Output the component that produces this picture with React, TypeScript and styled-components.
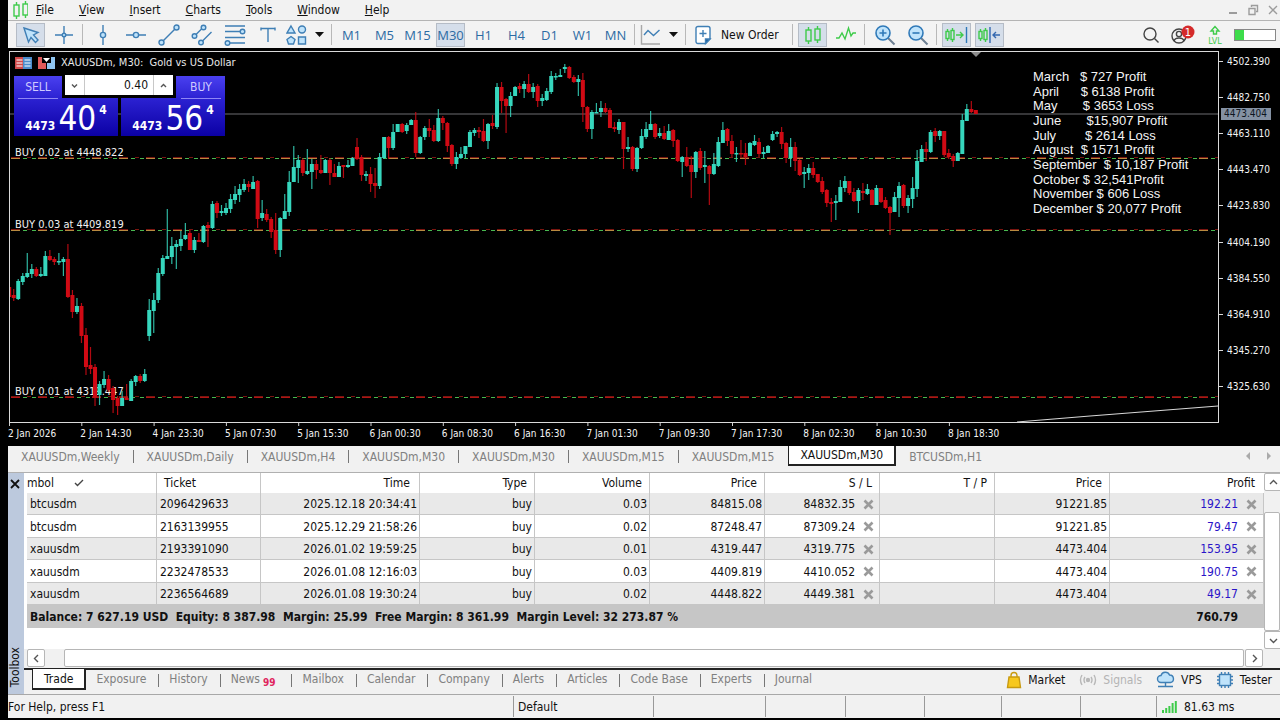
import React from "react";
import styled, { createGlobalStyle } from "styled-components";

const ui = `"DejaVu Sans Condensed", "DejaVu Sans", Verdana, sans-serif`;

const Global = createGlobalStyle`
  *, *::before, *::after { box-sizing: border-box; }
  body { margin: 0; background: #000; }
  body, button, input, table { font-family: ${ui}; font-stretch: condensed; font-size: 12px; color: #111; }
  button, input { margin: 0; padding: 0; border: 0; background: none; }
  svg { display: block; flex: none; }
`;

const Shell = styled.div`
  min-height: 100vh;
  padding-left: 8px;
  display: flex;
  flex-direction: column;
  background: #000;
  overflow: hidden;
`;

/* ---------- menu and toolbar ---------- */

const MenuBar = styled.nav`
  display: flex;
  align-items: center;
  height: 21px;
  padding-left: 5px;
  background: #f2f2f2;
  border-bottom: 1px solid #b4b4b4;
`;

const MenuItem = styled.button`
  padding: 0 17px 0 8px;
  line-height: 20px;
  &::first-letter { text-decoration: underline; }
`;

const WindowControls = styled.div`
  display: flex;
  gap: 8px;
  margin-left: auto;
  padding-right: 1px;
`;

const Toolbar = styled.div`
  display: flex;
  align-items: center;
  height: 27px;
  padding: 0 4px 0 6px;
  background: #f3f3f3;
`;

const Cell = styled.span<{ $w?: number }>`
  width: ${(p) => p.$w ?? 33}px;
  display: flex;
  justify-content: center;
`;

const Tool = styled.button<{ $on?: boolean }>`
  width: 29px;
  max-width: 100%;
  height: 24px;
  display: flex;
  align-items: center;
  justify-content: center;
  border: 1px solid ${(p) => (p.$on ? "#b5bcc6" : "transparent")};
  background: ${(p) => (p.$on ? "#d5deea" : "transparent")};
`;

const Period = styled(Tool)`
  font-family: "Open Sans", "Noto Sans", sans-serif;
  font-stretch: normal;
  font-size: 13px;
  color: #2c6ba3;
`;

const Divider = styled.span`
  width: 6px;
  height: 21px;
  background: linear-gradient(#b8b8b8, #b8b8b8) 2px 0 / 1px 100% no-repeat;
`;

const NewOrder = styled.button`
  width: 101px;
  display: flex;
  align-items: center;
  justify-content: flex-start;
  gap: 8px;
  padding-left: 6px;
`;

const Status = styled.div`
  display: flex;
  align-items: center;
  gap: 10px;
  margin-left: auto;
`;

const Battery = styled.span`
  width: 42px;
  height: 12px;
  border: 1px solid #888;
  background: linear-gradient(90deg, #3ddc4a 9px, #fff 9px);
`;

/* ---------- chart ---------- */

const ChartPane = styled.section`
  display: flex;
  height: 398px;
  padding: 3px 0 0 1px;
  color: #e8e8e8;
`;

const PlotColumn = styled.div`
  flex: 1;
  min-width: 0;
  display: flex;
  flex-direction: column;
`;

const Plot = styled.div`
  position: relative;
  height: 372px;
  border: 1px solid #dadada;
  overflow: hidden;
`;

const AxisSvg = styled.svg`
  overflow: visible;
  text { font: 10px ${ui}; font-stretch: condensed; fill: #f4f4f4; }
`;

const ChartSvg = styled.svg`
  text { font: 11px ${ui}; font-stretch: condensed; fill: #f2f2f2; }
`;

const PriceAxis = styled.ul`
  position: relative;
  width: 61px;
  height: 342px;
  margin: 0;
  padding: 4px 0 0;
  list-style: none;
  display: flex;
  flex-direction: column;
  justify-content: space-between;
`;

const PriceTick = styled.li`
  display: flex;
  align-items: center;
  gap: 4px;
  height: 12px;
  font-size: 10px;
  color: #f4f4f4;
  &::before { content: ""; width: 4px; height: 1px; background: #d8d8d8; }
`;

const CurrentPrice = styled.li`
  position: absolute;
  top: 57px;
  left: 2px;
  width: 50px;
  padding-left: 3px;
  font-size: 10px;
  line-height: 12px;
  background: #8491a3;
  color: #0c1420;
`;

const ChartTitle = styled.div`
  position: absolute;
  top: 4px;
  left: 5px;
  display: flex;
  align-items: center;
  font-size: 11px;
  line-height: 14px;
  white-space: pre;
  svg + svg { margin: 0 6px 0 6px; }
`;

const TradePanel = styled.div`
  position: absolute;
  top: 24px;
  left: 4px;
  display: flex;
  gap: 3px;
`;

const Quote = styled.button<{ $side: "left" | "right" }>`
  width: 104px;
  height: 60px;
  display: flex;
  flex-direction: column;
  justify-content: space-between;
  align-items: ${(p) => (p.$side === "left" ? "flex-start" : "flex-end")};
  background: linear-gradient(#4a40f0, #2a20d0 40%, #0b00a4);
  color: #fff;
`;

const QuoteSide = styled.span`
  width: 40px;
  margin: 0 4px;
  line-height: 22px;
  text-align: center;
  color: #cfcaff;
  border-bottom: 1px solid #8f86f5;
`;

const QuotePrice = styled.span`
  display: flex;
  align-items: flex-end;
  align-self: center;
  gap: 3px;
  height: 35px;
  font-weight: bold;
  line-height: 20px;
`;

const Pips = styled.span`
  font-size: 33px;
  font-weight: normal;
  line-height: 35px;
`;

const Point = styled.span`
  align-self: flex-start;
  line-height: 18px;
`;

const Lots = styled.div`
  position: absolute;
  top: -1px;
  left: 48px;
  width: 114px;
  display: flex;
  padding: 0 3px 3px;
  background: #000;
`;

const LotInput = styled.input`
  flex: 1;
  min-width: 0;
  height: 20px;
  padding-right: 5px;
  text-align: right;
  background: #fff;
  border: solid #c8c8c8;
  border-width: 0 1px;
`;

const Spin = styled.button`
  width: 19px;
  display: grid;
  place-items: center;
  background: #fff;
`;

const Notes = styled.ul`
  position: absolute;
  top: 18px;
  left: 1023px;
  height: 146px;
  margin: 0;
  padding: 0;
  list-style: none;
  display: flex;
  flex-direction: column;
  justify-content: space-between;
  font-family: "Liberation Sans", Arial, sans-serif;
  font-stretch: normal;
  font-size: 13px;
  line-height: 14px;
  white-space: pre;
  color: #f4f4f4;
`;

/* ---------- tabs ---------- */

const ChartTabs = styled.div`
  display: flex;
  align-items: flex-start;
  height: 27px;
  background: #f1f1f1;
  border-bottom: 1px solid #b0b0b0;
`;

const Tab = styled.button<{ $on?: boolean; $plain?: boolean }>`
  position: relative;
  padding: ${(p) => (p.$on ? "1px 11px 0" : "2px 14px 0 13px")};
  line-height: ${(p) => (p.$on ? "17px" : "18px")};
  color: ${(p) => (p.$on ? "#111" : "#808080")};
  background: ${(p) => (p.$on ? "#fff" : "transparent")};
  border: solid #222;
  border-width: ${(p) => (p.$on ? "0 2px 2px 1px" : "0")};
  &::after {
    content: "";
    display: ${(p) => (p.$on || p.$plain ? "none" : "block")};
    position: absolute;
    right: 0;
    top: 4px;
    height: 13px;
    border-right: 1px solid #777;
  }
`;

const TabScroll = styled.div`
  display: flex;
  gap: 15px;
  margin-left: auto;
  padding: 6px 8px 0 0;
`;

/* ---------- toolbox ---------- */

const Toolbox = styled.section`
  display: flex;
  height: 222px;
  background: #f1f1f1;
  border-bottom: 1px solid #a8a8a8;
`;

const Strip = styled.div`
  width: 16px;
  display: flex;
  flex-direction: column;
  justify-content: space-between;
  align-items: center;
  padding: 6px 2px 7px 0;
  background: #bcc9dd;
`;

const StripLabel = styled.span`
  writing-mode: vertical-rl;
  transform: rotate(180deg);
  line-height: 12px;
`;

const ToolboxBody = styled.div`
  flex: 1;
  min-width: 0;
  display: flex;
  flex-direction: column;
`;

const Upper = styled.div`
  display: flex;
  height: 176px;
`;

const TableArea = styled.div`
  flex: 1;
  min-width: 0;
  padding-left: 3px;
  background: #fff;
`;

const Trades = styled.table`
  width: 100%;
  height: 155px;
  table-layout: fixed;
  border-collapse: separate;
  border-spacing: 0;
  line-height: 16px;
  th, td { padding: 0 2px; text-align: right; white-space: nowrap; border-right: 1px solid #c6c6c6; }
  th { height: 20px; padding-right: 7px; font-weight: normal; background: #fff; }
  th:first-child, th:nth-child(2), td:first-child, td:nth-child(2) { text-align: left; }
  th:first-child { padding-left: 0; }
  th:nth-child(2) { padding-left: 7px; }
  td:first-child, td:nth-child(2) { padding-left: 3px; }
  th:nth-child(3), th:last-child { padding-right: 9px; }
  th:last-child { border-right: 0; }
  tbody tr { background: #fff; }
  tbody td { height: 22px; padding-top: 1px; border-bottom: 1px solid #c6c6c6; }
  tbody tr:nth-child(odd) { background: #e9e9e9; }
  tbody tr:nth-child(even) td { height: 23px; }
  tfoot td { height: 23px; background: #c6c6c6; border: 0; font-weight: bold; }
  tfoot td:last-child { padding-right: 26px; text-align: right; }
`;

const Sort = styled.svg`
  display: inline-block;
  margin-left: 20px;
`;

const Closable = styled.span<{ $profit?: boolean }>`
  display: flex;
  align-items: center;
  justify-content: flex-end;
  gap: 8px;
  height: 16px;
  padding-right: ${(p) => (p.$profit ? 4 : 3)}px;
  color: ${(p) => (p.$profit ? "#2a14c8" : "inherit")};
`;

const CloseButton = styled.button`
  height: 14px;
`;

const VScroll = styled.div`
  width: 16px;
  display: flex;
  flex-direction: column;
  background: #f1f1f1;
`;

const HScroll = styled.div`
  display: flex;
  height: 19px;
  padding: 0 17px 0 3px;
`;

const ScrollButton = styled.button`
  width: 18px;
  height: 18px;
  flex: none;
  display: grid;
  place-items: center;
  background: #fff;
  border: 1px solid #b6b6b6;
  border-radius: 2px;
`;

const VThumb = styled.span`
  flex: 1;
  margin-top: 21px;
  background: #fff;
  border: 1px solid #b6b6b6;
  border-radius: 2px;
`;

const HThumb = styled.span`
  flex: 1;
  height: 18px;
  margin: 0 1px 0 19px;
  background: #fff;
  border: 1px solid #b6b6b6;
  border-radius: 2px;
`;

const BottomTabs = styled.div`
  flex: 1;
  display: flex;
  align-items: flex-start;
  padding-left: 8px;
  border-top: 2px solid #222;
`;

const BottomTab = styled(Tab)`
  padding: ${(p) => (p.$on ? "1px 11px 0" : "0 13px 0 10px")};
  margin-top: ${(p) => (p.$on ? "-1px" : "0")};
  line-height: 18px;
`;

const Count = styled.sup`
  margin: 0 4px 0 3px;
  font-size: 10px;
  font-weight: bold;
  line-height: 0;
  vertical-align: -3px;
  color: #e0245e;
`;

const Services = styled.div`
  display: flex;
  gap: 14px;
  margin-left: auto;
  padding: 1px 8px 0 0;
`;

const Service = styled.a<{ $off?: boolean }>`
  display: flex;
  align-items: center;
  gap: 6px;
  line-height: 18px;
  text-decoration: none;
  color: ${(p) => (p.$off ? "#b4b4b4" : "#111")};
`;

/* ---------- status bar ---------- */

const StatusBar = styled.footer`
  display: flex;
  height: 23px;
  margin-bottom: 2px;
  padding: 1px 0;
  background: #f1f1f1;
  line-height: 24px;
`;

const StatusCell = styled.span<{ $w?: number }>`
  ${(p) => (p.$w ? `width: ${p.$w}px;` : "flex: 1;")}
  display: flex;
  align-items: center;
  gap: 6px;
  padding-left: 4px;
  border-left: 1px solid #999;
  &:first-child { padding-left: 0; border: 0; }
`;

/* ---------- data ---------- */

/* One candle per group: high, body top, body bottom, low, direction. */
const CANDLES = `286 287 297 298 r|289 295 298 301 r|279 281 299 300 g|273 276 282 285 g|253 273 277 278 g|264 269 274 278 g|267 269 276 277 r|267 274 276 277 g|251 256 276 276 g|250 256 260 261 r|257 259 262 265 r|253 261 262 265 g|257 259 262 276 g|244 259 297 298 r|290 295 312 318 r|298 306 312 314 g|303 306 336 343 r|328 335 367 375 r|347 365 369 374 r|364 367 397 406 r|381 384 395 405 g|371 379 385 388 g|375 379 390 392 r|386 388 400 413 r|396 398 406 415 r|391 398 406 406 g|384 398 400 400 r|379 381 401 401 g|375 376 382 386 g|374 376 381 383 r|369 374 381 382 g|299 310 336 341 g|293 300 311 333 g|268 273 300 303 g|255 258 274 276 g|209 256 259 259 g|237 246 257 264 g|240 244 247 269 g|231 239 246 251 g|223 235 239 240 g|230 233 250 250 r|237 240 250 253 g|233 240 242 242 r|225 226 242 243 g|222 225 228 247 r|201 204 228 229 g|201 203 213 218 r|205 211 213 216 g|203 208 213 215 g|194 199 209 213 g|186 194 200 204 g|184 189 195 202 g|179 184 190 192 g|181 184 187 192 r|176 182 189 189 g|180 181 219 228 r|200 213 218 221 g|209 214 220 222 r|217 219 232 238 r|213 230 250 254 r|217 218 250 257 g|194 211 219 219 g|171 182 212 216 g|146 167 182 182 g|155 160 168 183 g|158 160 173 176 r|149 171 174 175 g|159 164 172 189 g|160 164 170 179 r|155 170 173 174 r|159 160 173 173 g|158 160 173 185 r|164 173 177 177 r|162 166 177 177 g|165 165 167 178 r|160 165 167 168 g|157 158 166 166 g|138 147 159 160 r|155 157 175 181 r|171 174 176 181 g|167 174 184 192 r|168 183 186 198 r|153 157 186 189 g|137 137 158 159 g|136 137 148 159 r|124 132 148 150 g|124 124 132 132 g|123 124 132 133 r|123 125 131 134 g|119 120 125 125 g|112 120 153 157 r|136 137 153 154 g|126 128 137 140 g|119 128 131 137 r|125 130 141 142 r|109 118 141 142 g|116 118 123 130 r|122 123 146 152 r|144 145 164 166 r|152 157 164 169 g|147 154 158 159 g|146 146 154 158 g|130 132 147 147 g|128 130 133 136 g|127 130 132 138 r|119 131 141 142 r|123 124 141 149 g|115 123 126 129 r|83 87 127 129 g|82 87 101 113 r|98 99 106 133 r|92 96 106 117 g|86 87 96 96 g|83 86 89 93 r|81 84 89 98 g|74 84 92 93 r|83 87 92 98 g|84 86 101 107 r|94 98 101 106 g|88 91 100 101 g|71 76 92 94 g|73 76 77 80 g|69 75 77 77 g|64 67 69 73 g|66 67 78 79 r|75 77 82 83 r|75 79 82 96 g|73 80 107 122 r|106 107 129 132 r|110 112 129 139 g|103 112 113 113 g|101 108 112 117 g|103 108 112 113 r|108 110 128 128 r|122 127 129 132 r|119 122 130 134 g|122 122 149 169 r|137 147 149 152 g|146 147 169 171 r|147 148 169 172 g|129 136 148 149 g|122 129 137 139 g|111 124 130 130 g|123 124 137 139 r|128 133 136 138 g|126 133 139 140 r|124 131 140 140 g|129 130 141 147 r|139 140 161 162 r|156 157 162 177 g|147 157 166 167 r|156 165 172 198 r|151 152 172 178 g|148 151 168 170 r|151 165 167 183 g|165 166 174 205 r|153 164 174 175 g|137 142 166 167 g|122 130 143 143 g|128 129 141 146 r|135 141 154 157 r|147 153 154 162 g|140 153 154 157 r|143 153 157 165 r|142 143 156 156 g|135 141 145 146 g|138 142 154 157 r|147 152 154 158 g|145 146 153 153 g|131 134 140 141 g|131 132 134 137 g|127 132 144 149 r|142 143 158 163 r|138 147 158 167 g|142 147 161 171 r|159 160 175 176 r|167 172 174 188 g|164 168 173 180 g|162 168 175 178 r|174 174 182 183 r|177 181 192 194 r|189 190 203 207 r|198 202 204 222 r|195 201 203 220 g|180 187 202 202 g|176 181 188 192 g|181 181 193 195 r|188 192 201 202 r|188 190 201 213 g|183 191 193 200 r|184 189 194 195 g|189 190 205 205 r|185 188 205 205 g|188 188 202 203 r|197 200 208 209 r|206 207 213 235 r|192 197 212 212 g|182 186 198 217 g|184 185 206 208 r|195 198 206 213 g|177 188 199 208 g|150 161 189 197 g|145 149 162 162 g|142 149 152 161 r|130 132 152 153 g|128 131 136 142 r|130 131 136 140 g|131 131 155 157 r|149 153 157 159 r|154 156 161 167 r|152 153 161 161 g|114 120 154 154 g|104 109 121 121 g|101 109 112 113 r|110 110 114 114 r`
  .split("|")
  .map((c, i) => {
    const [high, top, bottom, low, dir] = c.split(" ");
    return { x: 9.2 + i * 4.517, high: +high, top: +top, bottom: +bottom, low: +low, up: dir === "g" };
  });

const ORDERS = [
  { y: 158, label: "BUY 0.02 at 4448.822", wide: "#b88a40" },
  { y: 230, label: "BUY 0.03 at 4409.819", wide: "#b88a40" },
  { y: 397, label: "BUY 0.01 at 4319.447", wide: "#b01414" },
];

const TIMES = ["2 Jan 2026", "2 Jan 14:30", "4 Jan 23:30", "5 Jan 07:30", "5 Jan 15:30", "6 Jan 00:30", "6 Jan 08:30", "6 Jan 16:30", "7 Jan 01:30", "7 Jan 09:30", "7 Jan 17:30", "8 Jan 02:30", "8 Jan 10:30", "8 Jan 18:30"];
const PRICES = ["4502.390", "4482.750", "4463.110", "4443.470", "4423.830", "4404.190", "4384.550", "4364.910", "4345.270", "4325.630"];
const MONTHS = ["March   $ 727 Profit", "April      $ 6138 Profit", "May       $ 3653 Loss", "June       $15,907 Profit", "July        $ 2614 Loss", "August  $ 1571 Profit", "September  $ 10,187 Profit", "October $ 32,541Profit", "November $ 606 Loss", "December $ 20,077 Profit"];
const TABS = ["XAUUSDm,Weekly", "XAUUSDm,Daily", "XAUUSDm,H4", "XAUUSDm,M30", "XAUUSDm,M30", "XAUUSDm,M15", "XAUUSDm,M15", "XAUUSDm,M30", "BTCUSDm,H1"];
const ROWS = [
  ["btcusdm", "2096429633", "2025.12.18 20:34:41", "buy", "0.03", "84815.08", "84832.35", "91221.85", "192.21"],
  ["btcusdm", "2163139955", "2025.12.29 21:58:26", "buy", "0.02", "87248.47", "87309.24", "91221.85", "79.47"],
  ["xauusdm", "2193391090", "2026.01.02 19:59:25", "buy", "0.01", "4319.447", "4319.775", "4473.404", "153.95"],
  ["xauusdm", "2232478533", "2026.01.08 12:16:03", "buy", "0.03", "4409.819", "4410.052", "4473.404", "190.75"],
  ["xauusdm", "2236564689", "2026.01.08 19:30:24", "buy", "0.02", "4448.822", "4449.381", "4473.404", "49.17"],
];
const COLS = [130, 104, 159, 115, 115, 115, 115, 115, 115];
const PANELS = ["Trade", "Exposure", "History", "News", "Mailbox", "Calendar", "Company", "Alerts", "Articles", "Code Base", "Experts", "Journal"];

/* ---------- icons ---------- */

const B = "#3f7fb5";
const F = "#bfe3fb";
const G = "#3ecb4a";

const Icon = ({ w = 22, h = 22, c = B, children }: { w?: number; h?: number; c?: string; children: React.ReactNode }) => (
  <svg width={w} height={h} viewBox={`0 0 ${w} ${h}`} fill="none" stroke={c} strokeWidth="1.4" aria-hidden="true">
    {children}
  </svg>
);

const DrawTools: [string, React.ReactNode][] = [
  ["Vertical line", <path key="a" d="M11 1v7M11 14v7" />],
  ["Horizontal line", <path key="a" d="M1 11h7M14 11h7" />],
];

const Chevron = ({ d }: { d: string }) => (
  <Icon w={9} h={9} c="#555"><path d={d} /></Icon>
);
const LEFT = "M6 1L2.500 4.500L6 8";
const RIGHT = "M3 1L6.500 4.500L3 8";
const UP = "M1 6L4.500 2.500L8 6";
const DOWN = "M1 3L4.500 6.500L8 3";

const Caret = () => <Icon w={9} h={5}><path d="M0 0h9L4.500 5z" fill="#111" stroke="none" /></Icon>;

const CandlePair = () => (
  <g>
    <path d="M3.500 1v3M3.500 15v3M12.500 0v3M12.500 14v3" />
    <rect x="1" y="4" width="5" height="11" />
    <rect x="10" y="3" width="5" height="11" />
  </g>
);

const ThinCandles = () => (
  <g stroke={G}>
    <path d="M2.500 2v2.500M2.500 11.500V14M7.500 1v2.500M7.500 12.500V15" />
    <rect x="1" y="4.500" width="3" height="7" />
    <rect x="6" y="3.500" width="3" height="9" />
  </g>
);

const Cross = () => (
  <Icon w={11} h={11} c="#9a9a9a"><path d="M1.500 1.500l8 8M9.500 1.500l-8 8" strokeWidth="2.600" /></Icon>
);

const Magnifier = ({ plus }: { plus?: boolean }) => (
  <Icon>
    <path d="M14 14l6.500 6.500" stroke="#6c7f92" strokeWidth="2" />
    <circle cx="9" cy="9" r="7" fill={F} stroke="#2f79b8" strokeWidth="1.600" />
    <path d={plus ? "M5.500 9h7M9 5.500v7" : "M5.500 9h7"} stroke="#2f79b8" strokeWidth="1.600" />
  </Icon>
);

const ToolButton = ({ label, on, w, children }: { label: string; on?: boolean; w?: number; children: React.ReactNode }) => (
  <Cell $w={w}>
    <Tool $on={on} aria-label={label}>{children}</Tool>
  </Cell>
);

/* ---------- sections ---------- */

const TopBars = () => (
  <>
    <MenuBar>
      <Icon w={15} h={18} c={G}><CandlePair /></Icon>
      {["File", "View", "Insert", "Charts", "Tools", "Window", "Help"].map((m) => (
        <MenuItem key={m}>{m}</MenuItem>
      ))}
      <WindowControls>
        <button aria-label="Minimize"><Icon w={12} h={12} c="#9c9c9c"><path d="M2 9h8" strokeWidth="2" /></Icon></button>
        <button aria-label="Restore"><Icon w={12} h={12} c="#9c9c9c"><path d="M4.500 3V1.500h6v6H9M2 4.500h6v6H2z" /></Icon></button>
        <button aria-label="Close"><Icon w={12} h={12} c="#9c9c9c"><path d="M2 2l8 8M10 2l-8 8" /></Icon></button>
      </WindowControls>
    </MenuBar>
    <Toolbar role="toolbar">
      <ToolButton label="Cursor" on>
        <Icon w={18} h={18}><path d="M2 2l14 4.500-4.500 2.500 4.500 5-2.500 2.500-4.500-5-2.500 4.500z" fill={F} /></Icon>
      </ToolButton>
      <ToolButton label="Crosshair">
        <Icon><path d="M11 2v18M2 11h18" /><circle cx="11" cy="11" r="1.800" fill={F} /></Icon>
      </ToolButton>
      <Divider />
      {DrawTools.map(([label, art]) => (
        <ToolButton key={label} label={label}><Icon>{art}<circle cx="11" cy="11" r="2.600" fill={F} /></Icon></ToolButton>
      ))}
      <ToolButton label="Trendline">
        <Icon><path d="M4.500 17.500l13-13" /><circle cx="3.500" cy="18.500" r="2.500" fill={F} /><circle cx="18.500" cy="3.500" r="2.500" fill={F} /></Icon>
      </ToolButton>
      <ToolButton label="Channel">
        <Icon><path d="M4 11.500l8-8M10 18.500L20.500 8" /><circle cx="3.500" cy="12" r="2.300" fill={F} /><circle cx="12.500" cy="3.500" r="2.300" fill={F} /><circle cx="10" cy="18.500" r="2.300" fill={F} /></Icon>
      </ToolButton>
      <ToolButton label="Fibonacci">
        <Icon><path d="M1 2h20M1 7.500h15M1 13.500h20M6 19h15" /><circle cx="18.500" cy="7.500" r="2.300" fill={F} /><circle cx="3.500" cy="19" r="2.300" fill={F} /></Icon>
      </ToolButton>
      <ToolButton label="Text"><Icon><path d="M4 4.500h14M11 4.500V18M4 3.500v3M18 3.500v3" /></Icon></ToolButton>
      <ToolButton label="Shapes" w={26}>
        <Icon><path d="M5 2l4 7H1z" fill={F} /><circle cx="16" cy="5.500" r="3.500" fill={F} /><path d="M5 12.500l4 3-1.500 4.500h-5L1 15.500z" fill={F} /><path d="M12.500 13h7v7h-7z" fill={F} /></Icon>
      </ToolButton>
      <ToolButton label="More shapes" w={19}><Caret /></ToolButton>
      <Divider />
      {["M1", "M5", "M15", "M30", "H1", "H4", "D1", "W1", "MN"].map((p) => (
        <Cell key={p}><Period $on={p === "M30"}>{p}</Period></Cell>
      ))}
      <Divider />
      <ToolButton label="Chart type" w={26}>
        <Icon><path d="M1.500 1v19H20" stroke="#a8a8a8" /><path d="M4 11l4-4.500 5.500 5 6-5.500" /></Icon>
      </ToolButton>
      <ToolButton label="More chart types" w={19}><Caret /></ToolButton>
      <Divider />
      <NewOrder>
        <Icon w={18} h={20}><path d="M3 1.500h10a2 2 0 0 1 2 2V14l-4.500 4.500H3a2 2 0 0 1-2-2v-13a2 2 0 0 1 2-2z" fill="#fff" /><path d="M15 14l-4.500 4.500V14z" fill="#1d5f9e" /><path d="M4.500 8.500h7M8 5v7" /></Icon>
        New Order
      </NewOrder>
      <Divider />
      <ToolButton label="Candlesticks" on><Icon w={16} h={18} c={G}><CandlePair /></Icon></ToolButton>
      <ToolButton label="Line chart"><Icon c={G}><path d="M1 14h3l3-5 3 6 3.500-11 2.500 8 2-3h3" /></Icon></ToolButton>
      <Divider />
      <ToolButton label="Zoom in"><Magnifier plus /></ToolButton>
      <ToolButton label="Zoom out"><Magnifier /></ToolButton>
      <Divider />
      <ToolButton label="Auto scroll" on>
        <Icon w={23} h={16}><ThinCandles /><path d="M11 8h7M15 5l3 3-3 3" stroke={G} /><path d="M21.500 0v16" stroke="#2f79b8" /></Icon>
      </ToolButton>
      <ToolButton label="Chart shift" on>
        <Icon w={23} h={16}><ThinCandles /><path d="M12 0v16M22 8h-7M18 5l-3 3 3 3" stroke="#3468b0" /></Icon>
      </ToolButton>
      <Status>
        <button aria-label="Search"><Icon w={18} h={18} c="#444"><circle cx="8" cy="8" r="6" /><path d="M12.500 12.500l4 4" /></Icon></button>
        <button aria-label="Account">
          <Icon w={26} h={20} c="#444">
            <circle cx="9" cy="11" r="7" /><circle cx="9" cy="9" r="2.600" /><path d="M4 16c1-4 9-4 10 0" />
            <circle cx="18" cy="7" r="6.500" fill="#d42a2a" stroke="none" />
            <text x="18" y="11" textAnchor="middle" fontSize="11" fill="#fff" stroke="none">1</text>
          </Icon>
        </button>
        <Icon w={18} h={20} c={G}>
          <path d="M9 1.500L5 6h2.500v3h3V6H13z" />
          <text x="9" y="19" textAnchor="middle" fontSize="9" fill={G} stroke="none">LVL</text>
        </Icon>
        <Battery />
      </Status>
    </Toolbar>
  </>
);

const Chart = () => (
  <ChartPane>
    <PlotColumn>
      <Plot>
        <ChartSvg width="100%" height="370" role="img" aria-label="XAUUSDm M30 candlestick chart">
          <g transform="translate(-10 -52)">
            <path d="M10 114H3000" stroke="#6c6c70" />
            {ORDERS.map((o) => (
              <g key={o.y}>
                <path d={`M11 ${o.y - 0.5}H3000`} stroke="#7a1610" strokeDasharray="9 7 4 7" />
                <path d={`M11 ${o.y + 0.5}H3000`} stroke={o.wide} strokeDasharray="9 18" />
                <path d={`M23 ${o.y + 0.5}H3000`} stroke="#48b850" strokeDasharray="4 5 4 14" />
              </g>
            ))}
            {ORDERS.map((o) => <text key={o.y} x="15" y={o.y - 2}>{o.label}</text>)}
            {CANDLES.map((c) => (
              <g key={c.x} fill={c.up ? "#36d6bd" : "#d00a14"}>
                <rect x={c.x - 0.6} y={c.high} width="1.2" height={Math.max(1, c.low - c.high)} opacity="0.85" />
                <rect x={c.x - 2} y={c.top} width="4" height={Math.max(1.500, c.bottom - c.top)} />
              </g>
            ))}
            <path d="M1017 422L1090 416L1218 406" stroke="#d8d8d8" fill="none" />
            <path d="M971 52h10l-5 5z" fill="#8c8c8c" />
          </g>
        </ChartSvg>
        <ChartTitle>
          <Icon w={17} h={12}>
            <path d="M0 0h8v12H0z" fill="#d04848" stroke="none" /><path d="M8 0h9v12H8z" fill="#4a8ccc" stroke="none" />
            <path d="M1.500 3h6M1.500 6h6M1.500 9h6M9.500 3h6M9.500 6h6M9.500 9h6" stroke="#fff" strokeWidth="1.200" />
          </Icon>
          <Icon w={17} h={12}>
            <path d="M0 0h4v6h4v6H0z" fill="#e05a5a" stroke="none" /><path d="M17 0h-4v6H9v6h8z" fill="#8ec4f0" stroke="none" />
            <path d="M5 1h7l-3.500 4z" fill="#fff" stroke="none" />
          </Icon>
          XAUUSDm, M30:  Gold vs US Dollar
        </ChartTitle>
        <TradePanel>
          <Quote $side="left">
            <QuoteSide>SELL</QuoteSide>
            <QuotePrice>4473 <Pips>40</Pips><Point>4</Point></QuotePrice>
          </Quote>
          <Quote $side="right">
            <QuoteSide>BUY</QuoteSide>
            <QuotePrice>4473 <Pips>56</Pips><Point>4</Point></QuotePrice>
          </Quote>
          <Lots>
            <Spin aria-label="Decrease volume"><Chevron d="M2 3.500L4.500 6L7 3.500" /></Spin>
            <LotInput aria-label="Volume" defaultValue="0.40" />
            <Spin aria-label="Increase volume"><Chevron d="M2 6L4.500 3.500L7 6" /></Spin>
          </Lots>
        </TradePanel>
        <Notes>{MONTHS.map((m) => <li key={m}>{m}</li>)}</Notes>
      </Plot>
      <AxisSvg width="100%" height="22">
        {TIMES.map((t, i) => (
          <g key={t}>
            <path d={`M${i * 72.300 + 0.500} 0v3`} stroke="#d0d0d0" />
            <text x={i * 72.300 - 1} y="14">{t}</text>
          </g>
        ))}
      </AxisSvg>
    </PlotColumn>
    <PriceAxis>
      {PRICES.map((p) => <PriceTick key={p}>{p}</PriceTick>)}
      <CurrentPrice>4473.404</CurrentPrice>
    </PriceAxis>
  </ChartPane>
);

const TradeTable = () => (
  <Trades>
    <colgroup>{COLS.map((w, i) => <col key={i} width={w} />)}<col /></colgroup>
    <thead>
      <tr>
        <th scope="col">mbol<Sort width="10" height="8" viewBox="0 0 10 8" fill="none" stroke="#444" strokeWidth="1.4"><path d="M1 4l2.500 2.500L9 1" /></Sort></th>
        {["Ticket", "Time", "Type", "Volume", "Price", "S / L", "T / P", "Price", "Profit"].map((h, i) => (
          <th key={i} scope="col">{h}</th>
        ))}
      </tr>
    </thead>
    <tbody>
      {ROWS.map(([symbol, ticket, time, type, volume, open, sl, price, profit]) => (
        <tr key={ticket}>
          <td>{symbol}</td><td>{ticket}</td><td>{time}</td><td>{type}</td><td>{volume}</td><td>{open}</td>
          <td><Closable>{sl}<CloseButton aria-label="Remove stop loss"><Cross /></CloseButton></Closable></td>
          <td />
          <td>{price}</td>
          <td><Closable $profit>{profit}<CloseButton aria-label="Close position"><Cross /></CloseButton></Closable></td>
        </tr>
      ))}
    </tbody>
    <tfoot>
      <tr>
        <td colSpan={9}>Balance: 7 627.19 USD&nbsp; Equity: 8 387.98&nbsp; Margin: 25.99&nbsp; Free Margin: 8 361.99&nbsp; Margin Level: 32 273.87 %</td>
        <td>760.79</td>
      </tr>
    </tfoot>
  </Trades>
);

export default function App() {
  return (
    <Shell>
      <Global />
      <TopBars />
      <Chart />
      <ChartTabs>
        {TABS.map((t, i) => <Tab key={i} $on={i === 7} $plain={i === 6 || i === 8}>{t}</Tab>)}
        <TabScroll>
          <button aria-label="Previous tabs"><Icon w={6} h={8}><path d="M5 0v8L1 4z" fill="#aaa" stroke="none" /></Icon></button>
          <button aria-label="Next tabs"><Icon w={6} h={8}><path d="M1 0v8l4-4z" fill="#aaa" stroke="none" /></Icon></button>
        </TabScroll>
      </ChartTabs>
      <Toolbox>
        <Strip>
          <button aria-label="Close toolbox"><Icon w={10} h={10} c="#111"><path d="M1 1l8 8M9 1L1 9" strokeWidth="1.800" /></Icon></button>
          <StripLabel>Toolbox</StripLabel>
        </Strip>
        <ToolboxBody>
          <Upper>
            <TableArea><TradeTable /></TableArea>
            <VScroll>
              <ScrollButton aria-label="Scroll up"><Chevron d={UP} /></ScrollButton>
              <VThumb />
              <ScrollButton aria-label="Scroll down"><Chevron d={DOWN} /></ScrollButton>
            </VScroll>
          </Upper>
          <HScroll>
            <ScrollButton aria-label="Scroll left"><Chevron d={LEFT} /></ScrollButton>
            <HThumb />
            <ScrollButton aria-label="Scroll right"><Chevron d={RIGHT} /></ScrollButton>
          </HScroll>
          <BottomTabs>
            {PANELS.map((p) => (
              <BottomTab key={p} $on={p === "Trade"} $plain={p === "Journal"}>
                {p}{p === "News" && <Count>99</Count>}
              </BottomTab>
            ))}
            <Services>
              <Service href="#market">
                <Icon w={16} h={18} c="#c89a10"><path d="M5 6V4.500a3 3 0 0 1 6 0V6" /><path d="M3 6h10l1.500 10.500h-13z" fill="#f7c81e" /></Icon>
                Market
              </Service>
              <Service href="#signals" $off>
                <Icon w={18} h={14} c="#b8b8b8"><circle cx="9" cy="7" r="1.500" fill="#b8b8b8" /><path d="M6 4q-2 3 0 6M12 4q2 3 0 6M3 2q-3 5 0 10M15 2q3 5 0 10" /></Icon>
                Signals
              </Service>
              <Service href="#vps">
                <Icon w={19} h={18}><path d="M5 11.500a3.500 3.500 0 0 1 0-7 4.500 4.500 0 0 1 8.500-.5 3.800 3.800 0 0 1 1 7.500z" fill={F} /><path d="M9.500 11.500V15M2 15.500h15M7 15.500h5" /></Icon>
                VPS
              </Service>
              <Service href="#tester">
                <Icon w={18} h={18}><path d="M5.500 1v16M9 1v16M12.500 1v16M1 5.500h16M1 9h16M1 12.500h16" /><rect x="3.500" y="3.500" width="11" height="11" fill={F} /></Icon>
                Tester
              </Service>
            </Services>
          </BottomTabs>
        </ToolboxBody>
      </Toolbox>
      <StatusBar>
        <StatusCell>For Help, press F1</StatusCell>
        <StatusCell $w={140}>Default</StatusCell>
        <StatusCell $w={112} />
        <StatusCell $w={80} />
        <StatusCell $w={79} />
        <StatusCell $w={77} />
        <StatusCell $w={79} />
        <StatusCell $w={76} />
        <StatusCell $w={124}>
          <Icon w={17} h={14} c={G}><path d="M2 10v3M5.200 8v5M8.400 6v7M11.600 3v10M14.800 1v12" strokeWidth="2" /></Icon>
          81.63 ms
        </StatusCell>
      </StatusBar>
    </Shell>
  );
}
